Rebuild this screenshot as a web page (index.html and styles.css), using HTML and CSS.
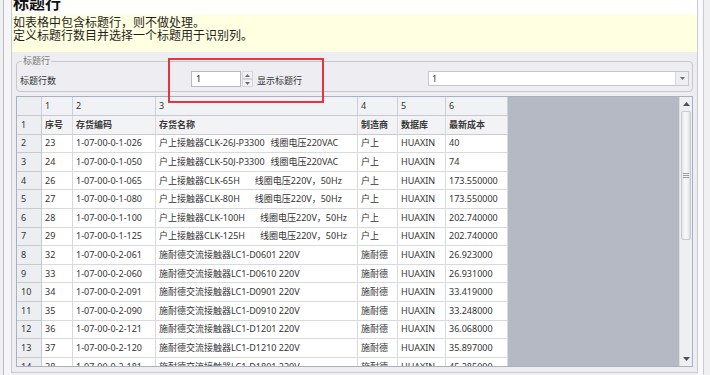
FILE: index.html
```html
<!DOCTYPE html>
<html lang="zh-CN">
<head>
<meta charset="utf-8">
<title>标题行</title>
<link rel="stylesheet" href="styles.css">
</head>
<body>
<div class="window">
  <div class="edge-left"></div>
  <div class="panel">
    <div class="title">标题行</div>
    <div class="notice">
      <div>如表格中包含标题行，则不做处理。</div>
      <div>定义标题行数目并选择一个标题用于识别列。</div>
    </div>
    <div class="body">
      <fieldset class="group">
        <legend>标题行</legend>
        <div class="group-row">
          <span class="lbl lbl-count">标题行数</span>
          <div class="spin">
            <div class="spin-input">1</div>
            <div class="spin-btns">
              <div class="spin-btn"><svg width="5" height="3" viewBox="0 0 5 3"><path d="M0 3 L2.5 0 L5 3 Z" fill="#6b6e76"/></svg></div>
              <div class="spin-btn"><svg width="5" height="3" viewBox="0 0 5 3"><path d="M0 0 L2.5 3 L5 0 Z" fill="#6b6e76"/></svg></div>
            </div>
          </div>
          <span class="lbl lbl-show">显示标题行</span>
          <div class="combo">
            <div class="combo-text">1</div>
            <div class="combo-btn"><svg width="5" height="3" viewBox="0 0 5 3"><path d="M0 0 L2.5 3 L5 0 Z" fill="#6b6e76"/></svg></div>
          </div>
        </div>
      </fieldset>
      <div class="grid">
        <div class="grid-area">
          <table class="sheet">
            <colgroup>
              <col class="c0"><col class="c1"><col class="c2"><col class="c3"><col class="c4"><col class="c5"><col class="c6">
            </colgroup>
            <tr class="colhead"><td class="rh"></td><td>1</td><td>2</td><td>3</td><td>4</td><td>5</td><td>6</td></tr>
            <tr class="titles"><td class="rh">1</td><td>序号</td><td>存货编码</td><td>存货名称</td><td>制造商</td><td>数据库</td><td>最新成本</td></tr>
            <tr><td class="rh">2</td><td>23</td><td>1-07-00-0-1-026</td><td>户上接触器CLK-26J-P3300<span class="gs">线圈电压220VAC</span></td><td>户上</td><td>HUAXIN</td><td>40</td></tr>
            <tr><td class="rh">3</td><td>24</td><td>1-07-00-0-1-050</td><td>户上接触器CLK-50J-P3300<span class="gs">线圈电压220VAC</span></td><td>户上</td><td>HUAXIN</td><td>74</td></tr>
            <tr><td class="rh">4</td><td>26</td><td>1-07-00-0-1-065</td><td>户上接触器CLK-65H<span class="gl">线圈电压220V，50Hz</span></td><td>户上</td><td>HUAXIN</td><td>173.550000</td></tr>
            <tr><td class="rh">5</td><td>27</td><td>1-07-00-0-1-080</td><td>户上接触器CLK-80H<span class="gl">线圈电压220V，50Hz</span></td><td>户上</td><td>HUAXIN</td><td>173.550000</td></tr>
            <tr><td class="rh">6</td><td>28</td><td>1-07-00-0-1-100</td><td>户上接触器CLK-100H<span class="gl">线圈电压220V，50Hz</span></td><td>户上</td><td>HUAXIN</td><td>202.740000</td></tr>
            <tr><td class="rh">7</td><td>29</td><td>1-07-00-0-1-125</td><td>户上接触器CLK-125H<span class="gl">线圈电压220V，50Hz</span></td><td>户上</td><td>HUAXIN</td><td>202.740000</td></tr>
            <tr><td class="rh">8</td><td>32</td><td>1-07-00-0-2-061</td><td>施耐德交流接触器LC1-D0601 220V</td><td>施耐德</td><td>HUAXIN</td><td>26.923000</td></tr>
            <tr><td class="rh">9</td><td>33</td><td>1-07-00-0-2-060</td><td>施耐德交流接触器LC1-D0610 220V</td><td>施耐德</td><td>HUAXIN</td><td>26.931000</td></tr>
            <tr><td class="rh">10</td><td>34</td><td>1-07-00-0-2-091</td><td>施耐德交流接触器LC1-D0901 220V</td><td>施耐德</td><td>HUAXIN</td><td>33.419000</td></tr>
            <tr><td class="rh">11</td><td>35</td><td>1-07-00-0-2-090</td><td>施耐德交流接触器LC1-D0910 220V</td><td>施耐德</td><td>HUAXIN</td><td>33.248000</td></tr>
            <tr><td class="rh">12</td><td>36</td><td>1-07-00-0-2-121</td><td>施耐德交流接触器LC1-D1201 220V</td><td>施耐德</td><td>HUAXIN</td><td>36.068000</td></tr>
            <tr><td class="rh">13</td><td>37</td><td>1-07-00-0-2-120</td><td>施耐德交流接触器LC1-D1210 220V</td><td>施耐德</td><td>HUAXIN</td><td>35.897000</td></tr>
            <tr><td class="rh">14</td><td>38</td><td>1-07-00-0-2-181</td><td>施耐德交流接触器LC1-D1801 220V</td><td>施耐德</td><td>HUAXIN</td><td>45.285000</td></tr>
          </table>
        </div>
        <div class="vscroll">
          <div class="sb-btn"><svg width="7" height="4" viewBox="0 0 7 4"><path d="M0 4 L3.5 0 L7 4 Z" fill="#4d5058"/></svg></div>
          <div class="sb-track">
            <div class="sb-thumb"><div class="grip"></div></div>
          </div>
          <div class="sb-btn"><svg width="7" height="4" viewBox="0 0 7 4"><path d="M0 0 L3.5 4 L7 0 Z" fill="#4d5058"/></svg></div>
        </div>
      </div>
    </div>
  </div>
  <div class="edge-right"></div>
</div>
<div class="highlight"></div>
</body>
</html>
```

FILE: styles.css
```css
html, body {
  margin: 0;
  padding: 0;
}
body {
  position: relative;
  width: 710px;
  height: 375px;
  overflow: hidden;
  background: #f0f0f3;
  font-family: "Noto Sans", "Noto Sans CJK SC", sans-serif;
  color: #333;
}
.window {
  display: flex;
  height: 375px;
}
.edge-left {
  width: 7px;
  margin-left: 3px;
  border-left: 1px solid #b9bcc4;
  background: #f6f6f8;
}
.panel {
  width: 685px;
  height: 372px;
  border: 1px solid #c9cbd3;
  border-top: none;
  display: flex;
  flex-direction: column;
  background: #eeeef2;
}
.edge-right {
  flex: 1;
  background: linear-gradient(to right, #fafafc 0, #fafafc 5px, #c9ccd4 5px, #c9ccd4 6px, #f0f0f3 6px);
}
.title {
  height: 14px;
  background: #fff;
  overflow: hidden;
  font-family: "Noto Sans CJK SC", sans-serif;
  font-weight: bold;
  font-size: 16px;
  line-height: 5px;
  padding-left: 1px;
  color: #111;
}
.notice {
  height: 38px;
  box-sizing: border-box;
  background: #ffffe1;
  font-family: "Noto Sans CJK SC", sans-serif;
  font-size: 12px;
  line-height: 13.5px;
  padding: 0.5px 0 0 1px;
  color: #1e1e1e;
}
.body {
  flex: 1;
  display: flex;
  flex-direction: column;
  padding: 0 4px 5px;
  min-height: 0;
}
.group {
  margin: 3px 0 0;
  padding: 0 3px 4px;
  border: 1px solid #c6c8d0;
  border-radius: 4px;
  min-width: 0;
  font-size: 9px;
}
.group legend {
  margin-left: 2px;
  padding: 0 1px;
  line-height: 12px;
  color: #777;
  font-family: "Noto Sans CJK SC", sans-serif;
}
.group-row {
  display: flex;
  align-items: flex-start;
  margin-top: 4px;
}
.lbl {
  font-family: "Noto Sans CJK SC", sans-serif;
  font-size: 9px;
  line-height: 12px;
  color: #333;
}
.lbl-count {
  width: 171px;
  margin-top: 4px;
}
.lbl-show {
  margin-left: 4px;
  margin-top: 4px;
}
.spin {
  display: flex;
}
.spin-input {
  width: 50px;
  height: 16px;
  box-sizing: border-box;
  border: 1px solid #b7bac2;
  background: #fff;
  font-size: 9px;
  line-height: 14px;
  padding-left: 4px;
  color: #222;
}
.spin-btns {
  display: flex;
  flex-direction: column;
  margin-left: 1px;
}
.spin-btn {
  width: 11px;
  height: 8px;
  display: flex;
  align-items: center;
  justify-content: center;
  background: #f2f2f5;
  border: 1px solid #d4d6dc;
  box-sizing: border-box;
}
.combo {
  margin-left: auto;
  width: 261px;
  height: 15px;
  box-sizing: border-box;
  border: 1px solid #c4c7cf;
  background: #fff;
  display: flex;
}
.combo-text {
  flex: 1;
  font-size: 9px;
  line-height: 13px;
  padding-left: 3px;
  color: #3b2660;
}
.combo-btn {
  width: 12px;
  border-left: 1px solid #d6d8de;
  background: #eeeff2;
  display: flex;
  align-items: center;
  justify-content: center;
}
.grid {
  margin-top: 4px;
  flex: 1;
  min-height: 0;
  border: 1px solid #a9b0bf;
  display: flex;
}
.grid-area {
  flex: 1;
  overflow: hidden;
  background: #b4b9c4;
}
.sheet {
  border-collapse: separate;
  border-spacing: 0;
  table-layout: fixed;
  width: 491px;
  font-size: 9px;
  color: #333;
}
.sheet col.c0 { width: 25px; }
.sheet col.c1 { width: 31px; }
.sheet col.c2 { width: 83px; }
.sheet col.c3 { width: 202px; }
.sheet col.c4 { width: 40px; }
.sheet col.c5 { width: 48px; }
.sheet col.c6 { width: 62px; }
.sheet td {
  height: 18.6px;
  box-sizing: border-box;
  padding: 0 0 0 3px;
  border-right: 1px solid #d9dade;
  border-bottom: 1px solid #d9dade;
  background: #fff;
  white-space: nowrap;
  overflow: hidden;
  line-height: 12px;
}
.sheet td.rh {
  background: #eceef2;
  border-right-color: #c6c9d1;
  border-bottom-color: #c6c9d1;
  padding-left: 4px;
}
.sheet tr.colhead td {
  height: 19px;
  background: #f1f2f5;
  border-bottom-color: #c6c9d1;
  border-right-color: #ccd0d7;
}
.sheet tr.colhead td.rh {
  background: #eceef2;
}
.sheet tr.titles td {
  background: #f3f3f6;
  border-bottom-color: #c9cbd2;
  font-weight: bold;
  color: #3a3a3a;
}
.sheet tr.titles td.rh {
  background: #eceef2;
  font-weight: normal;
  color: #333;
}
.gs { margin-left: 6px; }
.gl { margin-left: 15px; }
.vscroll {
  width: 12px;
  display: flex;
  flex-direction: column;
  background: #eeeff1;
  border-left: 1px solid #dcdde1;
}
.sb-btn {
  height: 14px;
  display: flex;
  align-items: center;
  justify-content: center;
}
.sb-track {
  flex: 1;
}
.sb-thumb {
  height: 129px;
  margin: 0 1px;
  box-sizing: border-box;
  border: 1px solid #c9cacf;
  border-radius: 2px;
  background: linear-gradient(to right, #e4e5e8, #f8f8f9 40%, #f1f1f3 70%, #dcdde1);
  display: flex;
  align-items: center;
  justify-content: center;
}
.grip {
  width: 6px;
  height: 5px;
  background: repeating-linear-gradient(to bottom, #9c9ea5 0, #9c9ea5 1px, transparent 1px, transparent 2px);
}
.highlight {
  position: absolute;
  left: 168px;
  top: 58px;
  width: 152px;
  height: 41px;
  border: 2px solid #e8353d;
}
```
